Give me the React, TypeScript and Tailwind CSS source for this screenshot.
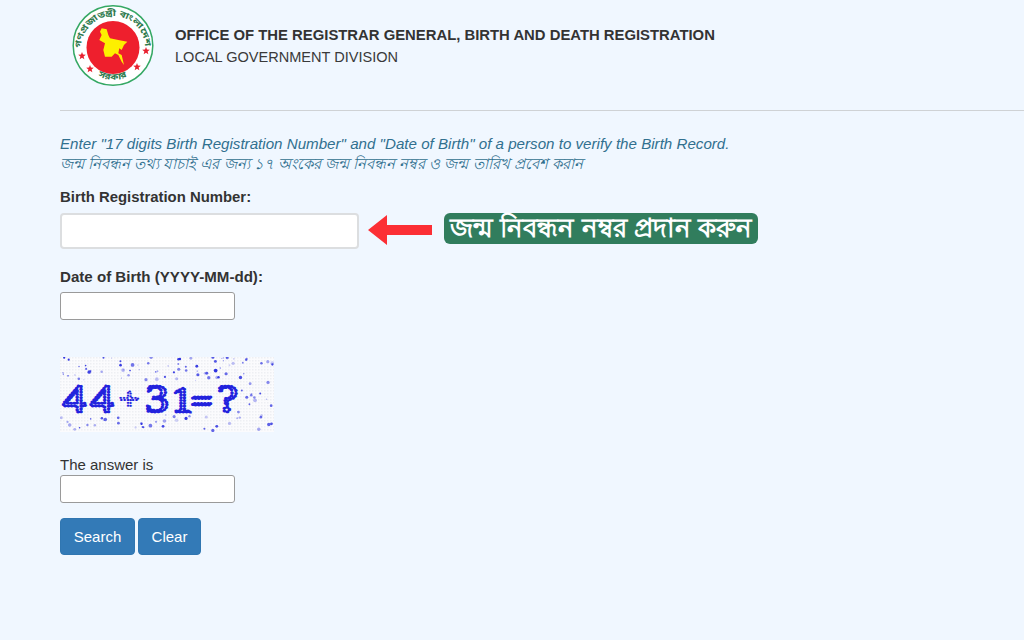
const F = "[font-family:'Liberation_Sans','Noto_Sans','Noto_Sans_CJK_SC',sans-serif]";

function Star({ x, y }: { x: number; y: number }) {
  const pts = Array.from({ length: 10 }, (_, i) => {
    const r = i % 2 ? 1.7 : 4;
    const a = (Math.PI / 5) * i - Math.PI / 2;
    return `${x + r * Math.cos(a)},${y + r * Math.sin(a)}`;
  }).join(" ");
  return <polygon points={pts} fill="#e8202f" />;
}

function Logo() {
  return (
    <svg width="84" height="84" viewBox="0 0 84 84" className="block">
      <circle cx="41" cy="41.5" r="39.8" fill="#fff" stroke="#35a864" strokeWidth="1.5" />
      <circle cx="41" cy="43.5" r="26.5" fill="#ee1f2d" />
      <g transform="translate(-22 -4) scale(0.3333)">
        <path
          d="M155 85 L170 88 L175 105 L180 115 L205 120 L232 125 L222 135 L215 150 L208 145 L205 160 L215 165 L222 195 L215 185 L205 165 L195 160 L185 170 L165 170 L160 150 L165 130 L148 120 L155 105 L150 95 Z"
          fill="#fdf000"
        />
      </g>
      <Star x={10} y={52} />
      <Star x={74} y={47} />
      <Star x={18} y={65} />
      <Star x={65} y={63} />
      <path id="logoTop" d="M9 44 A32 32 0 1 1 73 44" fill="none" />
      <path id="logoBottom" d="M26 72 A32 32 0 0 0 56 72" fill="none" />
      <text fontSize="8.6" fill="#2f7a4e" fontFamily="'Noto Sans Bengali','Noto Sans',sans-serif" fontWeight="700">
        <textPath href="#logoTop" textLength="99" lengthAdjust="spacingAndGlyphs">গণপ্রজাতন্ত্রী বাংলাদেশ</textPath>
      </text>
      <text fontSize="8.5" fill="#2f7a4e" fontFamily="'Noto Sans Bengali','Noto Sans',sans-serif" fontWeight="700">
        <textPath href="#logoBottom" textLength="30" lengthAdjust="spacingAndGlyphs">সরকার</textPath>
      </text>
    </svg>
  );
}

function Arrow() {
  return (
    <svg width="65" height="30" viewBox="0 0 65 30" className="block">
      <path d="M0 15 L19 0 L19 10 L64 10 L64 20 L19 20 L19 30 Z" fill="#fc2f35" />
    </svg>
  );
}

function rand(seed: number) {
  const x = Math.sin(seed * 127.1) * 43758.5453;
  return x - Math.floor(x);
}

function Captcha() {
  const dots = Array.from({ length: 210 }, (_, i) => ({
    x: rand(i + 1) * 214,
    y: rand(i + 500) * 75,
    r: 0.5 + rand(i + 900) * 1.4,
    o: 0.2 + rand(i + 1300) * 0.8,
  })).filter((d) => d.y < 24 || d.y > 58 || d.x > 178);
  return (
    <svg width="214" height="75" viewBox="0 0 214 75" className="block">
      <defs>
        <pattern id="cp" width="3" height="3" patternUnits="userSpaceOnUse">
          <rect width="3" height="3" fill="#fbfbfd" />
          <rect width="1.5" height="1.5" fill="#eeeff3" />
        </pattern>
      </defs>
      <rect width="214" height="75" fill="url(#cp)" />
      {dots.map((d, i) => (
        <circle key={i} cx={d.x} cy={d.y} r={d.r} fill="#2a2fe0" opacity={d.o} />
      ))}
      <text
        y="55"
        transform="scale(1.2 1)"
        fontFamily="'Liberation Serif',serif"
        fontSize="39"
        fill="none"
        stroke="#2222dd"
        strokeWidth="2.8"
        strokeLinecap="round"
        strokeDasharray="0.3 2.5"
      >
        <tspan x="2">4</tspan>
        <tspan x="25">4</tspan>
        <tspan x="49" dy="-3" fontSize="30" strokeWidth="1.8" fontFamily="'Liberation Sans',sans-serif">+</tspan>
        <tspan x="71" dy="3">3</tspan>
        <tspan x="93" fontSize="35">1</tspan>
        <tspan x="109" fontSize="32">=</tspan>
        <tspan x="131">?</tspan>
      </text>
    </svg>
  );
}

const inputCls = "block w-[175px] h-[28px] bg-white border border-[#9a9a9a] rounded-[3px]";

export default function App() {
  return (
    <div className={`w-[1024px] h-[640px] overflow-hidden bg-[#f0f7ff] text-[#333] ${F}`}>
      <div className="pl-[60px]">
        <header className="h-[111px] border-b border-[#cfd2d5] pt-[4px] pl-[12px] flex items-start">
          <Logo />
          <div className="ml-[19px] mt-[20px]">
            <div className="text-[14.85px] leading-[22px] font-bold text-[#333] whitespace-nowrap">
              OFFICE OF THE REGISTRAR GENERAL, BIRTH AND DEATH REGISTRATION
            </div>
            <div className="text-[14.55px] leading-[22px] text-[#3a3a3a] whitespace-nowrap">LOCAL GOVERNMENT DIVISION</div>
          </div>
        </header>

        <main className="pt-[22px]">
          <p className="text-[15.15px] leading-[21px] italic text-[#31708f] whitespace-nowrap">
            Enter "17 digits Birth Registration Number" and "Date of Birth" of a person to verify the Birth Record.
          </p>
          <p className="text-[14.85px] leading-[21px] italic text-[#31708f] whitespace-nowrap">
            জন্ম নিবন্ধন তথ্য যাচাই এর জন্য ১৭ অংকের জন্ম নিবন্ধন নম্বর ও জন্ম তারিখ প্রবেশ করান
          </p>

          <label className="block mt-[12px] text-[14.9px] leading-[20px] font-bold">Birth Registration Number:</label>
          <div className="flex items-start mt-[6px]">
            <div className="w-[299px] h-[36px] bg-white border-2 border-[#dcdee0] rounded-[4px]" />
            <div className="ml-[9px] mt-[2px]">
              <Arrow />
            </div>
            <div className="ml-[11px] h-[31px] px-[6px] rounded-[6px] bg-[#317d5d] text-white text-[26.4px] leading-[31px] font-bold whitespace-nowrap">
              জন্ম নিবন্ধন নম্বর প্রদান করুন
            </div>
          </div>

          <label className="block mt-[18px] text-[15.1px] leading-[20px] font-bold">Date of Birth (YYYY-MM-dd):</label>
          <div className={`${inputCls} mt-[5px]`} />

          <div className="mt-[37px]">
            <Captcha />
          </div>

          <label className="block mt-[23px] text-[15px] leading-[20px]">The answer is</label>
          <div className={`${inputCls} mt-0`} />

          <div className="flex gap-[3px] mt-[15px]">
            <button className="w-[75px] h-[37px] pt-[1px] bg-[#337ab7] border border-[#3076b1] rounded-[4px] text-white text-[15px]">Search</button>
            <button className="w-[63px] h-[37px] pt-[1px] bg-[#337ab7] border border-[#3076b1] rounded-[4px] text-white text-[15px]">Clear</button>
          </div>
        </main>
      </div>
    </div>
  );
}
